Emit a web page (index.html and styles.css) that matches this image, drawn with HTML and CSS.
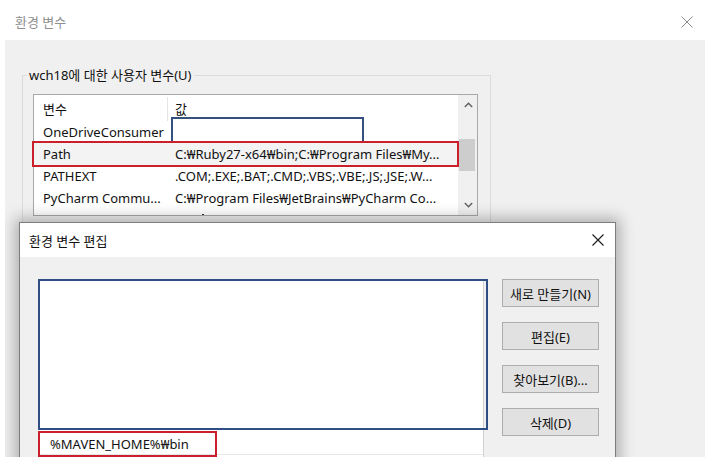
FILE: index.html
```html
<!DOCTYPE html>
<html lang="ko">
<head>
<meta charset="utf-8">
<title>환경 변수</title>
<link rel="stylesheet" href="styles.css">
</head>
<body>
<div class="titlebar">
  <span class="title">환경 변수</span>
  <svg class="close" width="12" height="12" viewBox="0 0 12 12"><path d="M0.5 0.5L11.5 11.5M11.5 0.5L0.5 11.5" stroke="#8c8c8c" stroke-width="1"/></svg>
</div>
<div class="panel">
  <fieldset class="group">
    <legend>wch18에 대한 사용자 변수(U)</legend>
    <div class="list">
      <div class="rows">
        <div class="row head"><span class="c1 sep">변수</span><span class="c2">값</span></div>
        <div class="row"><span class="c1">OneDriveConsumer</span><span class="c2"></span></div>
        <div class="row sel"><span class="c1">Path</span><span class="c2">C:₩Ruby27-x64₩bin;C:₩Program Files₩My...</span></div>
        <div class="row"><span class="c1">PATHEXT</span><span class="c2">.COM;.EXE;.BAT;.CMD;.VBS;.VBE;.JS;.JSE;.W...</span></div>
        <div class="row"><span class="c1">PyCharm Commu...</span><span class="c2">C:₩Program Files₩JetBrains₩PyCharm Co...</span></div>
        <div class="row partial"><span class="c1"></span><span class="c2"><i class="dot"></i></span></div>
      </div>
      <div class="scrollbar">
        <svg class="arrow" width="9" height="6" viewBox="0 0 9 6"><path d="M0.8 5L4.5 1.3L8.2 5" fill="none" stroke="#606060" stroke-width="1.4"/></svg>
        <div class="track"><div class="thumb"></div></div>
        <svg class="arrow" width="9" height="6" viewBox="0 0 9 6"><path d="M0.8 1L4.5 4.7L8.2 1" fill="none" stroke="#606060" stroke-width="1.4"/></svg>
      </div>
      <div class="edit-box"></div>
      <div class="mark mark-path"></div>
    </div>
  </fieldset>

  <div class="dialog">
    <div class="dlg-title">
      <span>환경 변수 편집</span>
      <svg class="dlg-close" width="12" height="12" viewBox="0 0 12 12"><path d="M0.5 0.5L11.5 11.5M11.5 0.5L0.5 11.5" stroke="#1a1a1a" stroke-width="1.1"/></svg>
    </div>
    <div class="dlg-body">
      <div class="dlg-list">
        <div class="dlg-space"></div>
        <div class="dlg-row"><span class="mark mark-row">%MAVEN_HOME%₩bin</span></div>
        <div class="focus-box"></div>
      </div>
      <div class="btns">
        <button class="btn">새로 만들기(N)</button>
        <button class="btn">편집(E)</button>
        <button class="btn">찾아보기(B)...</button>
        <button class="btn">삭제(D)</button>
      </div>
    </div>
  </div>
</div>
</body>
</html>
```
FILE: styles.css
```css
* { box-sizing: border-box; }
html, body { margin: 0; padding: 0; }
body {
  width: 718px;
  height: 462px;
  overflow: hidden;
  background: #ffffff;
  font-family: "Noto Sans", "Noto Sans CJK KR", sans-serif;
  font-size: 13px;
  color: #111111;
}
.titlebar {
  height: 40px;
  display: flex;
  align-items: center;
  justify-content: space-between;
  padding: 0 25px 0 15px;
}
.title { color: #8f8f8f; font-size: 13px; margin-top: 2px; }
.close { margin-top: 4px; }

.panel {
  position: relative;
  overflow: hidden;
  margin-left: 5px;
  width: 700px;
  height: 417px;
  background: #f0f0f0;
}

.group {
  margin: 26px 0 0 17px;
  width: 469px;
  height: 300px;
  padding: 0 4px;
  border: 1px solid #dcdcdc;
}
.group legend {
  padding: 0 2px;
  line-height: 18px;
}
.list {
  position: relative;
  margin: 10px 0 0 6px;
  width: 445px;
  height: 122px;
  background: #fff;
  border: 1px solid #a8a8a8;
  display: flex;
}
.rows { flex: 1; overflow: hidden; padding-top: 2px; }
.row {
  display: flex;
  height: 22px;
  line-height: 22px;
  white-space: nowrap;
}
.row.head { height: 24px; line-height: 24px; }
.row.sel { background: #f3f3f3; }
.c1 { width: 134px; padding-left: 9px; flex: none; overflow: hidden; }
.c2 { padding-left: 7px; }
.sep { border-right: 1px solid #e5e5e5; }
.dot {
  display: block;
  width: 2px;
  height: 2px;
  margin: 5px 0 0 27px;
  background: #333;
}

.scrollbar {
  width: 19px;
  flex: none;
  background: #f0f0f0;
  border-left: 1px solid #f0f0f0;
  display: flex;
  flex-direction: column;
  align-items: center;
}
.arrow { margin: 7px 0; flex: none; }
.track { flex: 1; width: 100%; padding-top: 24px; }
.thumb { width: 16px; height: 32px; background: #cdcdcd; }

.edit-box {
  position: absolute;
  left: 137px;
  top: 22px;
  width: 193px;
  height: 26px;
  border: 2px solid #34507f;
}
.mark { border: 2px solid #cc1f2c; }
.mark-path {
  position: absolute;
  left: -2px;
  top: 46px;
  width: 427px;
  height: 26px;
}

.dialog {
  position: absolute;
  left: 14px;
  top: 182px;
  width: 597px;
  height: 300px;
  background: #f0f0f0;
  border: 1px solid #7d7d7d;
  box-shadow: 0 0 14px 4px rgba(0, 0, 0, 0.28);
}
.dlg-title {
  height: 34px;
  background: #fff;
  display: flex;
  align-items: center;
  justify-content: space-between;
  padding: 0 11px 0 9px;
}
.dlg-body {
  display: flex;
  padding: 22px 0 0 18px;
  gap: 18px;
}
.dlg-list {
  position: relative;
  width: 446px;
  height: 200px;
  background: #fff;
  border-right: 1px solid #d0d0d0;
}
.dlg-space { height: 152px; }
.dlg-row {
  height: 24px;
  border-bottom: 1px solid #e6e6e6;
}
.mark-row {
  display: inline-block;
  width: 179px;
  height: 26px;
  line-height: 22px;
  padding-left: 10px;
}
.focus-box {
  position: absolute;
  left: 0;
  top: 0;
  width: 450px;
  height: 151px;
  border: 2px solid #2f4f84;
}
.btns {
  display: flex;
  flex-direction: column;
  gap: 15px;
}
.btn {
  width: 97px;
  height: 28px;
  padding: 0;
  font: inherit;
  color: #111111;
  background: #e1e1e1;
  border: 1px solid #adadad;
}
```
